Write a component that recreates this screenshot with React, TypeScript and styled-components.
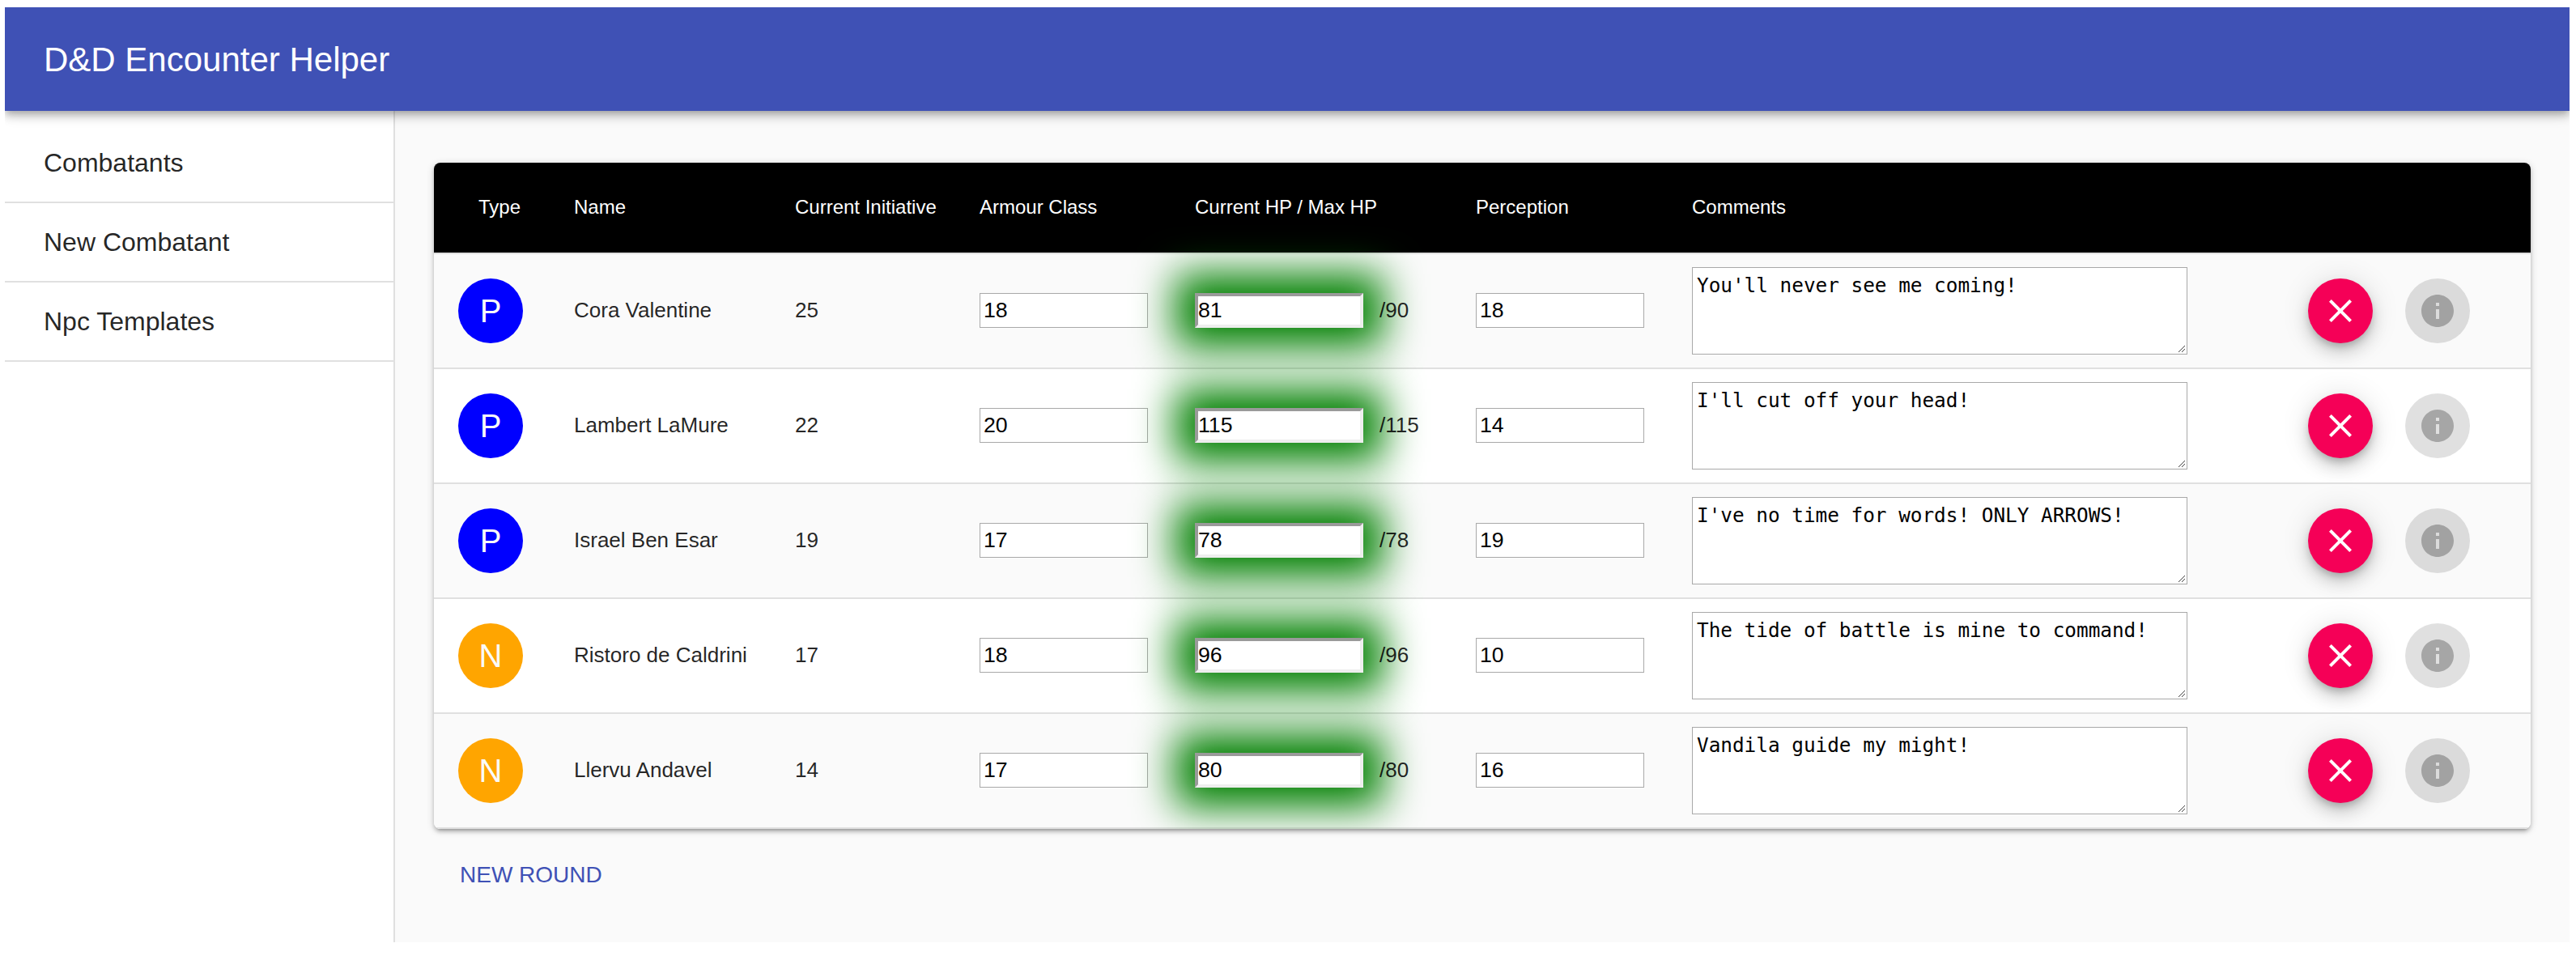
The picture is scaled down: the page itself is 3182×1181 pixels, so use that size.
import React from 'react';
import styled, { createGlobalStyle } from 'styled-components';

const GlobalStyle = createGlobalStyle`
  * { box-sizing: border-box; }
  body {
    margin: 0;
    background: #fff;
    font-family: Arial, 'Liberation Sans', sans-serif;
    color: rgba(0, 0, 0, 0.87);
  }
`;

const Page = styled.div`
  display: flex;
  flex-direction: column;
  width: 3168px;
  height: 1155px;
  margin: 9px 8px 17px 6px;
  background: #fafafa;
  overflow: hidden;
`;

const AppBar = styled.header`
  position: relative;
  z-index: 1;
  display: flex;
  align-items: center;
  flex: none;
  height: 128px;
  padding: 1px 48px 0;
  background: #3f51b5;
  color: #fff;
  box-shadow: 0 4px 8px -2px rgba(0, 0, 0, 0.2), 0 8px 10px 0 rgba(0, 0, 0, 0.14),
    0 2px 20px 0 rgba(0, 0, 0, 0.12);
`;

const Title = styled.h1`
  margin: 0;
  font-size: 42px;
  font-weight: 400;
  line-height: 47px;
`;

const Body = styled.div`
  display: flex;
  flex: 1;
`;

const Sidebar = styled.nav`
  flex: none;
  width: 482px;
  padding-top: 16px;
  background: #fff;
  border-right: 2px solid #e0e0e0;
`;

const NavItem = styled.div`
  display: flex;
  align-items: center;
  height: 98px;
  padding: 0 48px;
  border-bottom: 2px solid #e0e0e0;
  font-size: 32px;
  line-height: 36px;
`;

const Main = styled.main`
  flex: 1;
  padding: 64px 48px 0;
`;

const Paper = styled.section`
  background: #fff;
  border-radius: 8px;
  overflow: hidden;
  box-shadow: 0 2px 10px 0 rgba(0, 0, 0, 0.2), 0 4px 4px 0 rgba(0, 0, 0, 0.14),
    0 6px 2px -4px rgba(0, 0, 0, 0.12);
`;

const Table = styled.table`
  width: 100%;
  table-layout: fixed;
  border-collapse: separate;
  border-spacing: 0;
`;

const HeadCell = styled.th<{ $indent?: number }>`
  height: 113px;
  padding: 0 0 2px ${(p) => p.$indent ?? 0}px;
  background: #000;
  border-bottom: 2px solid #e0e0e0;
  color: #fff;
  font-size: 24px;
  font-weight: 400;
  line-height: 27px;
  text-align: left;
  white-space: nowrap;
`;

const Row = styled.tr`
  &:nth-of-type(odd) {
    background: #fafafa;
  }
`;

const Cell = styled.td<{ $indent?: number }>`
  height: 142px;
  padding: 0 0 0 ${(p) => p.$indent ?? 0}px;
  border-bottom: 2px solid #e0e0e0;
  font-size: 26px;
  line-height: 30px;
  vertical-align: middle;
  white-space: nowrap;
`;

const TextCell = styled(Cell)`
  padding-bottom: 2px;
`;

const Avatar = styled.div<{ $color: string }>`
  display: flex;
  align-items: center;
  justify-content: center;
  width: 80px;
  height: 80px;
  border-radius: 50%;
  background: ${(p) => p.$color};
  color: #fafafa;
  font-size: 40px;
  line-height: 44px;
`;

const Field = styled.input`
  display: block;
  width: 208px;
  height: 43px;
  margin: 0 0 1px;
  padding: 0 4px 1px;
  border: 1px solid #a9a9a9;
  background: #fff;
  color: #000;
  font: 26.67px/30px Arial, 'Liberation Sans', sans-serif;
  outline: none;
`;

const HpField = styled(Field)`
  padding: 0 0 1px;
  border: 4px solid;
  border-color: #9a9a9a #eee #eee #9a9a9a;
  box-shadow: 0 0 50px 24px green;
`;

const Hp = styled.div`
  display: flex;
  align-items: center;
  gap: 20px;
`;

const MaxHp = styled.span`
  margin-bottom: 2px;
`;

const CommentBox = styled.div`
  position: relative;
  width: 612px;
  height: 108px;
`;

const Comment = styled.textarea`
  display: block;
  width: 100%;
  height: 100%;
  margin: 0;
  padding: 6px 5px;
  border: 1px solid #a9a9a9;
  background: #fff;
  color: #000;
  font: 24.35px/31px 'DejaVu Sans Mono', monospace;
  resize: none;
  outline: none;
`;

const Grip = styled.svg`
  position: absolute;
  right: 3px;
  bottom: 3px;
  width: 8px;
  height: 8px;
`;

const Actions = styled.div`
  display: flex;
  gap: 40px;
`;

const Fab = styled.button`
  display: flex;
  align-items: center;
  justify-content: center;
  width: 80px;
  height: 80px;
  padding: 0;
  border: 0;
  border-radius: 50%;
  background: #f50057;
  color: #fff;
  box-shadow: 0 6px 10px -2px rgba(0, 0, 0, 0.2), 0 12px 20px 0 rgba(0, 0, 0, 0.14),
    0 2px 36px 0 rgba(0, 0, 0, 0.12);

  &:disabled {
    background: rgba(0, 0, 0, 0.12);
    color: rgba(0, 0, 0, 0.26);
    box-shadow: none;
  }
`;

const Icon = styled.svg`
  width: 48px;
  height: 48px;
  fill: currentColor;
`;

const TextButton = styled.button`
  display: block;
  height: 71px;
  margin-top: 21px;
  padding: 0 32px;
  border: 0;
  background: none;
  color: #3f51b5;
  font: 28px/31px Arial, 'Liberation Sans', sans-serif;
  text-transform: uppercase;
`;

type Combatant = {
  type: 'P' | 'N';
  name: string;
  initiative: number;
  armour: number;
  hp: number;
  maxHp: number;
  perception: number;
  comment: string;
};

const combatants: Combatant[] = [
  { type: 'P', name: 'Cora Valentine', initiative: 25, armour: 18, hp: 81, maxHp: 90, perception: 18, comment: "You'll never see me coming!" },
  { type: 'P', name: 'Lambert LaMure', initiative: 22, armour: 20, hp: 115, maxHp: 115, perception: 14, comment: "I'll cut off your head!" },
  { type: 'P', name: 'Israel Ben Esar', initiative: 19, armour: 17, hp: 78, maxHp: 78, perception: 19, comment: "I've no time for words! ONLY ARROWS!" },
  { type: 'N', name: 'Ristoro de Caldrini', initiative: 17, armour: 18, hp: 96, maxHp: 96, perception: 10, comment: 'The tide of battle is mine to command!' },
  { type: 'N', name: 'Llervu Andavel', initiative: 14, armour: 17, hp: 80, maxHp: 80, perception: 16, comment: 'Vandila guide my might!' },
];

const typeColors = { P: 'blue', N: 'orange' };
const columnWidths = [173, 273, 228, 266, 347, 267, 761, 275];
const navItems = ['Combatants', 'New Combatant', 'Npc Templates'];

function CombatantRow({ c }: { c: Combatant }) {
  return (
    <Row>
      <Cell $indent={30}>
        <Avatar $color={typeColors[c.type]}>{c.type}</Avatar>
      </Cell>
      <TextCell>{c.name}</TextCell>
      <TextCell>{c.initiative}</TextCell>
      <Cell>
        <Field defaultValue={c.armour} />
      </Cell>
      <Cell>
        <Hp>
          <HpField defaultValue={c.hp} />
          <MaxHp>/{c.maxHp}</MaxHp>
        </Hp>
      </Cell>
      <Cell>
        <Field defaultValue={c.perception} />
      </Cell>
      <Cell>
        <CommentBox>
          <Comment defaultValue={c.comment} spellCheck={false} />
          <Grip viewBox="0 0 8 8" stroke="#444" strokeWidth="1" fill="none">
            <path d="M0 8L8 0M4 8L8 4" />
          </Grip>
        </CommentBox>
      </Cell>
      <Cell>
        <Actions>
          <Fab aria-label="Remove">
            <Icon viewBox="0 0 24 24">
              <path d="M19 6.41L17.59 5 12 10.59 6.41 5 5 6.41 10.59 12 5 17.59 6.41 19 12 13.41 17.59 19 19 17.59 13.41 12z" />
            </Icon>
          </Fab>
          <Fab aria-label="Info" disabled>
            <Icon viewBox="0 0 24 24">
              <path d="M12 2C6.48 2 2 6.48 2 12s4.48 10 10 10 10-4.48 10-10S17.52 2 12 2zm1 15h-2v-6h2v6zm0-8h-2V7h2v2z" />
            </Icon>
          </Fab>
        </Actions>
      </Cell>
    </Row>
  );
}

export default function App() {
  return (
    <>
      <GlobalStyle />
      <Page>
        <AppBar>
          <Title>D&amp;D Encounter Helper</Title>
        </AppBar>
        <Body>
          <Sidebar>
            {navItems.map((item) => (
              <NavItem key={item}>{item}</NavItem>
            ))}
          </Sidebar>
          <Main>
            <Paper>
              <Table>
                <colgroup>
                  {columnWidths.map((w, i) => (
                    <col key={i} width={w} />
                  ))}
                </colgroup>
                <thead>
                  <tr>
                    <HeadCell $indent={55}>Type</HeadCell>
                    <HeadCell>Name</HeadCell>
                    <HeadCell>Current Initiative</HeadCell>
                    <HeadCell>Armour Class</HeadCell>
                    <HeadCell>Current HP / Max HP</HeadCell>
                    <HeadCell>Perception</HeadCell>
                    <HeadCell>Comments</HeadCell>
                    <HeadCell />
                  </tr>
                </thead>
                <tbody>
                  {combatants.map((c) => (
                    <CombatantRow key={c.name} c={c} />
                  ))}
                </tbody>
              </Table>
            </Paper>
            <TextButton>New Round</TextButton>
          </Main>
        </Body>
      </Page>
    </>
  );
}
